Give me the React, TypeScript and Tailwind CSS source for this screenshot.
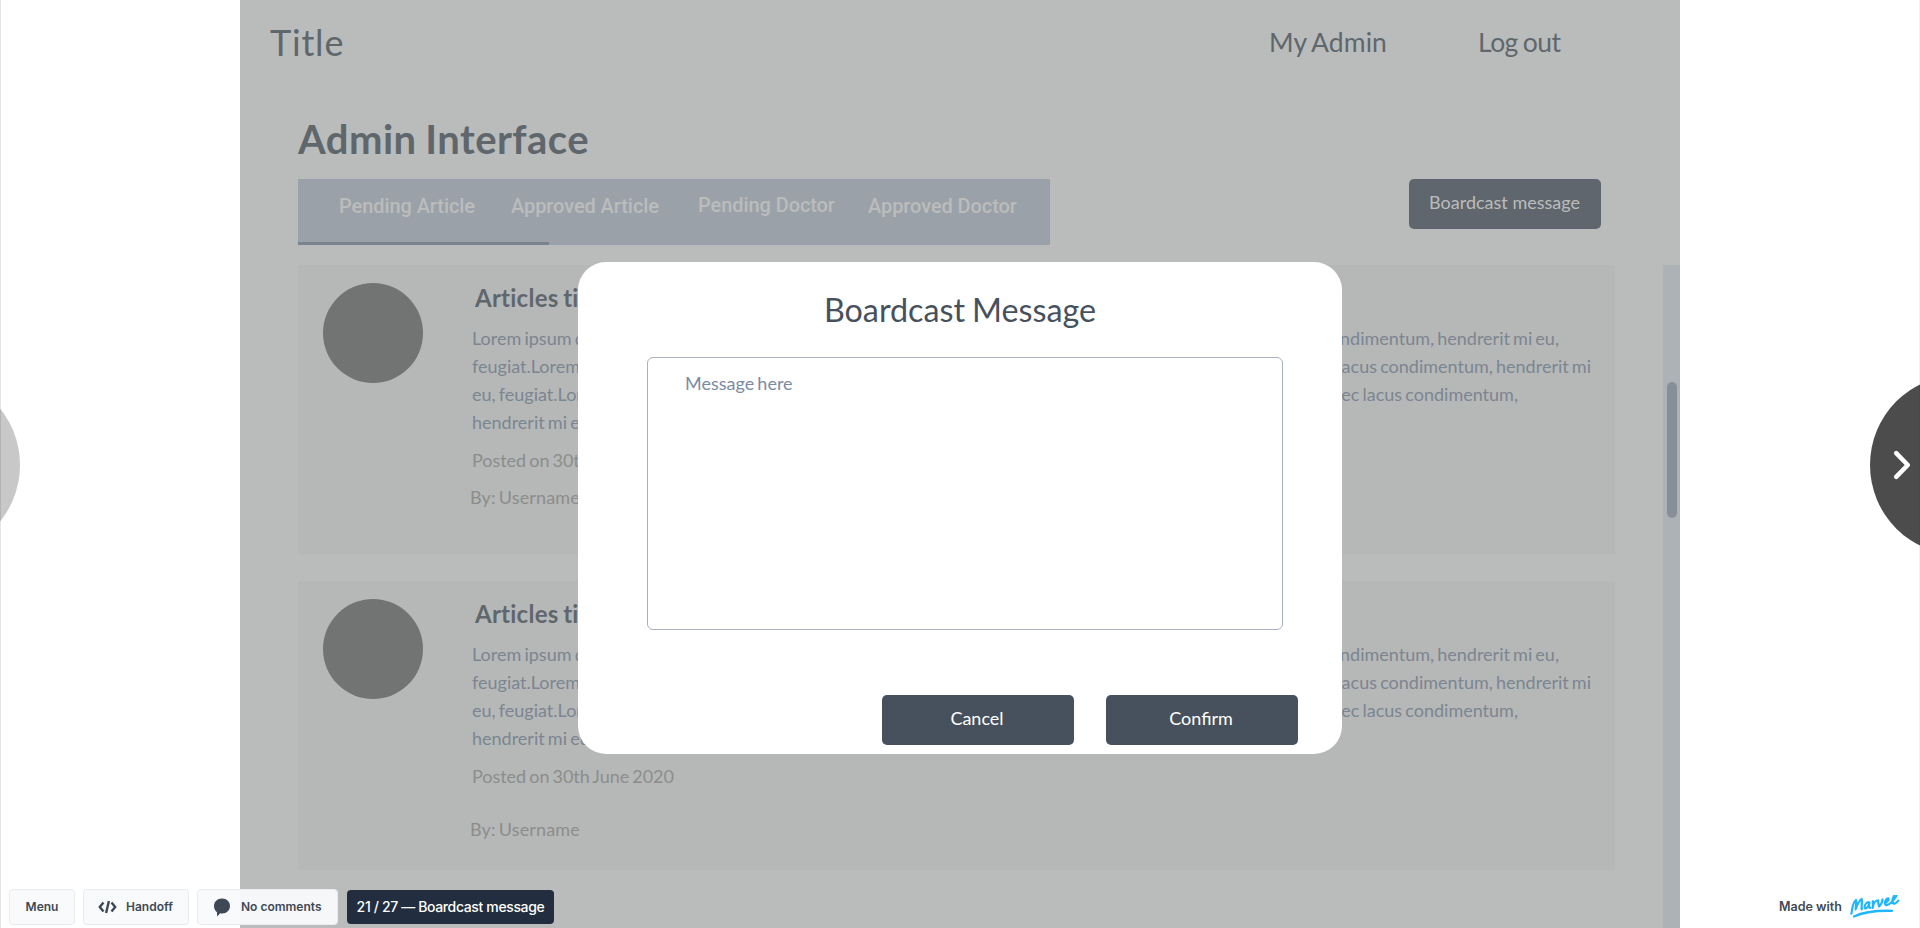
const lorem = [
  ["Lorem ipsum dolor sit amet, consectetur adipiscing elit.", "Donec nec lacus condimentum, hendrerit mi eu,"],
  ["feugiat.Lorem ipsum dolor sit amet, consectetur adipiscing elit.", "Donec nec lacus condimentum, hendrerit mi"],
  ["eu, feugiat.Lorem ipsum dolor sit amet, consectetur adipiscing elit.", "Donec nec lacus condimentum,"],
  ["hendrerit mi eu, feugiat.", ""],
];
const lineWidths = ["w-[1087px]", "w-[1119px]", "w-[1046px]", "w-[1046px]"];

function Article({ spaced }: { spaced?: boolean }) {
  return (
    <article className="flex h-[288.5px] w-[1317px] bg-[#b6b8b7] pl-[25px] pt-[18px]">
      <div className="size-[100px] shrink-0 rounded-full bg-[#727473]" />
      <div className="ml-[49px] shrink-0 text-[18px] leading-[28px]">
        <h2 className="ml-[3px] text-[24px] font-bold leading-[30px] tracking-[0.25px] text-[#5f676d] [font-variant-ligatures:none]">
          Articles title
        </h2>
        <div className="mt-[11px] text-[#7c8591]">
          {lorem.map(([a, b], i) => (
            <p key={i} className={`flex justify-between whitespace-nowrap ${lineWidths[i]}`}>
              <span>{a}</span>
              <span>{b}</span>
            </p>
          ))}
        </div>
        <p className="mt-[10px] tracking-[-0.04px] text-[#8b8d8c]">Posted on 30th June 2020</p>
        <p className={`ml-[-2px] tracking-[0.12px] text-[#8b8d8c] ${spaced ? "mt-[25px]" : "mt-[9px]"}`}>By: Username</p>
      </div>
    </article>
  );
}

function Modal() {
  return (
    <div className="absolute left-[578px] top-[262px] flex h-[492px] w-[764px] flex-col rounded-[28px] bg-white pt-[28px]">
      <h2 className="text-center text-[32.3px] leading-[40px] text-[#47515d]">Boardcast Message</h2>
      <div className="ml-[69px] mt-[27px] h-[273px] w-[636px] rounded-[6px] border-[1.5px] border-[#a9b2c1] pl-[37px] pt-[11px] text-[18px] leading-[28px] text-[#7b8ba5]">
        Message here
      </div>
      <div className="mt-[65px] flex gap-8 pl-[304px] text-[18px] text-white">
        <button className="h-[50px] w-[192px] rounded-[5px] bg-[#47515d] pb-[3px] pr-[2px]">Cancel</button>
        <button className="h-[50px] w-[192px] rounded-[5px] bg-[#47515d] pb-[3px] pr-[2px]">Confirm</button>
      </div>
    </div>
  );
}

function Toolbar() {
  const chip = "flex h-[36px] items-center rounded-[4px] border border-[#e9ebee] bg-[#f8fafc]/95";
  return (
    <div className="absolute left-[9px] top-[889px] flex font-['Inter',sans-serif] text-[12px] font-semibold text-[#3f4956]">
      <div className={`${chip} w-[66px] justify-center`}>Menu</div>
      <div className={`${chip} ml-[8px] w-[106px] pl-[14px]`}>
        <svg width="19" height="14" viewBox="0 0 19 14" fill="none" stroke="#3f4956" strokeWidth="2.4">
          <path d="M5.5 2.5 1.8 7l3.700 4.500M13.500 2.500 17.200 7l-3.700 4.500M10.900 1 8.100 13" />
        </svg>
        <span className="ml-[9px]">Handoff</span>
      </div>
      <div className={`${chip} ml-[8px] w-[141px] pl-[15px]`}>
        <svg width="18" height="19" viewBox="0 0 18 19" fill="#3f4956">
          <path d="M9 .5c4.700 0 8 3.200 8 7.500s-3.300 7.500-8 7.500c-.7 0-1.200 0-1.800-.2L4 18.500v-4.300C2 12.800 1 10.700 1 8 1 3.700 4.300.5 9 .5Z" />
        </svg>
        <span className="ml-[10px]">No comments</span>
      </div>
      <div className="ml-[9px] mt-px flex h-[34px] w-[207px] items-center justify-center whitespace-nowrap rounded-[4px] bg-[#222e3f] pb-[2px] text-[14px] font-medium tracking-[-0.36px] text-white">
        21 / 27 — Boardcast message
      </div>
    </div>
  );
}

function MadeWith() {
  return (
    <div className="absolute left-[1779px] top-[889px] flex h-[36px] items-center font-['Inter',sans-serif] text-[12.5px] font-semibold text-[#3f4956]">
      <span className="w-[71px] whitespace-nowrap pt-px">Made with</span>
      <svg width="52" height="24" viewBox="0 0 52 24" fill="none" stroke="#1fb6ff" strokeWidth="2.300" strokeLinecap="round" strokeLinejoin="round">
        <g transform="translate(1.500 16.500) rotate(-10) skewX(-12)">
          <path d="M0 2C.5-4 1.500-9 4-10.500 5.200-9 4-4 4.200-1.500 5.500-5 7.500-9.500 9.800-10.500 11-8.500 9.500-3 10.500-.5" />
          <path d="M18-5.500C15.500-7.500 12.800-4.500 13.300-1.800 14 .8 17-.5 18-5.500 17.500-2.500 17.500-.5 19.200-.3" />
          <path d="M21.300-6.300C22-4 21.800-2 21.600 0 22-3.500 23-6 25-6.200" />
          <path d="M26.800-6.200C27-4 27.300-1.500 28.200-.3 30-1.500 31-4 31.200-6.500" />
          <path d="M34.200-3C36.500-3.200 38-5 37.300-6.200 35.500-7.500 33.700-5 33.900-2.500 34.200.5 37.500.2 40-1.800" />
          <path d="M40-1.800C43-4 46.500-8 45.800-10 43.800-11 41.200-6 41.400-2.500 42 .8 45.500 0 47.500-2.500" />
        </g>
        <path d="M4 21.500C13 17 27 15.500 42 15.800" />
      </svg>
    </div>
  );
}

export default function App() {
  return (
    <div className="relative h-[928px] w-[1920px] overflow-hidden bg-white font-['Lato',sans-serif]">
      <div className="[word-spacing:-0.09em]">
        <main className="ml-[240px] h-[928px] w-[1440px] overflow-hidden bg-[#babcbb]">
          <header className="flex h-[114px] pl-[30px] pt-[22px] text-[#5f676d]">
            <h1 className="w-[999px] text-[36px] leading-[40px] tracking-[0.8px] [font-variant-ligatures:none]">Title</h1>
            <nav className="flex text-[26.5px] leading-[40px]">
              <a className="w-[209px] tracking-[0.1px]">My Admin</a>
              <a className="tracking-[-0.5px]">Log out</a>
            </nav>
          </header>
          <h2 className="h-[65px] pl-[58px] text-[40px] font-bold leading-[50px] tracking-[0.45px] text-[#5f676d]">Admin Interface</h2>
          <div className="flex h-[86px] items-start pl-[58px]">
            <div className="flex h-[66px] w-[752px] flex-col justify-between bg-[#9aa1a8]">
              <div className="flex whitespace-nowrap pl-[41px] pt-[15px] font-['Roboto',sans-serif] text-[20px] font-medium leading-[24px] tracking-[-0.08px] text-[#bbbcbc] [word-spacing:0px]">
                <span className="w-[172px]">Pending Article</span>
                <span className="w-[187px]">Approved Article</span>
                <span className="-mt-px w-[170px]">Pending Doctor</span>
                <span>Approved Doctor</span>
              </div>
              <div className="h-[3px] w-[251px] bg-[#7b838f]" />
            </div>
            <button className="ml-[359px] h-[50px] w-[192px] rounded-[5px] bg-[#5f666d] pb-[3px] pr-px text-[18px] text-[#bbbdbc]">
              Boardcast message
            </button>
          </div>
          <div className="flex">
            <section className="flex w-[1423px] flex-col gap-[27.5px] pl-[58px]">
              <Article />
              <Article spaced />
            </section>
            <div className="h-[663px] w-[17px] bg-[#adb2b6] pl-[4px] pt-[117px]">
              <div className="h-[136px] w-[10px] rounded-full bg-[#868f97]" />
            </div>
          </div>
        </main>
        <Modal />
      </div>
      <div className="absolute left-[-160px] top-[375px] size-[180px] rounded-full bg-[#c8c8c8]" />
      <div className="absolute left-[1870px] top-[375px] flex size-[180px] items-center rounded-full bg-[#4c4c4c] pl-[22px]">
        <svg width="20" height="32" viewBox="0 0 20 32" fill="none" stroke="white" strokeWidth="4.500" strokeLinecap="round" strokeLinejoin="round">
          <path d="M4.200 4.200 15.800 16 4.200 27.800" />
        </svg>
      </div>
      <Toolbar />
      <MadeWith />
      <div className="absolute inset-y-0 left-0 w-px bg-black/10" />
      <div className="absolute inset-y-0 right-0 w-px bg-black/5" />
    </div>
  );
}
